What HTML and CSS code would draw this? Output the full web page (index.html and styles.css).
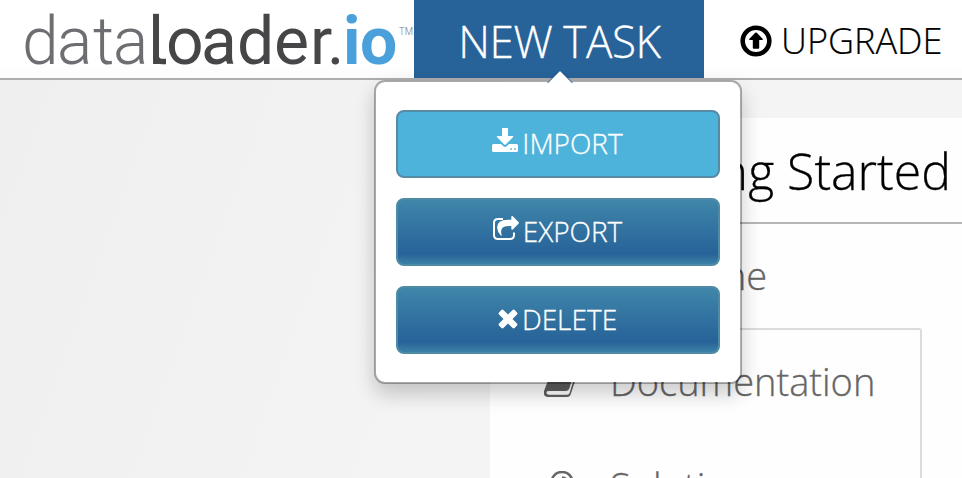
FILE: index.html
```html
<!DOCTYPE html>
<html lang="en">
<head>
<meta charset="utf-8">
<title>dataloader.io</title>
<link rel="stylesheet" href="styles.css">
</head>
<body>
<header class="topbar">
  <svg class="logo" width="414" height="78" viewBox="0 0 414 78">
    <text class="logo-data" x="22 57 93 113" y="64">data</text>
    <text class="logo-loader" x="148 166 201 237 274 310 327" y="64">loader.</text>
    <path class="logo-tail" d="M156 55Q156 61.500 162 61.500H166"/>
    <text class="logo-io" x="343 360" y="64">io</text>
    <text class="logo-tm" x="399" y="35" textLength="14" lengthAdjust="spacingAndGlyphs">TM</text>
  </svg>
  <div class="new-task">
    <span class="new-task-label">NEW TASK</span>
    <div class="popover">
      <svg class="arrow" width="28" height="14" viewBox="0 0 28 14"><path class="arrow-edge" d="M1 13 14 0 27 13Z"/><path class="arrow-fill" d="M1 14 14 1 27 14Z"/></svg>
      <a class="btn btn-active">
        <svg class="ico" width="26" height="25" viewBox="0 0 26 25"><path d="M10.500 0h5q.5 0 .5.600V8h4.700q.9.100.4.900L13.700 16.500q-.7.600-1.400 0L4.900 8.900Q4.400 8 5.300 8H10V.6q0-.6.5-.6Z"/><path fill-rule="evenodd" d="M1.500 16H9l2.300 2.300q1.700 1.500 3.400 0L17 16h7.500q1.500 0 1.500 1.500v5q0 1.500-1.500 1.500h-23Q0 24 0 22.500v-5Q0 16 1.500 16Zm16.700 4.200v1.600h1.700v-1.600Zm3.900 0v1.600h1.700v-1.600Z"/></svg>
        <span>IMPORT</span></a>
      <a class="btn">
        <svg class="ico" width="26" height="25" viewBox="0 0 26 25"><path class="ico-line" d="M10 2.900H5Q1 2.900 1 7v12q0 4 4 4h12q4 0 4-4v-2.500"/><path d="M19 0q.5 0 .8.300l5.900 5.900q.6.600 0 1.200l-5.900 6q-1.300.9-1.500-.6V10q-7-.5-9 2-2 2.600-.7 6.600.3 1.500-.8.900-3.600-4-3.700-8Q4.100 3.700 15 3.700h3.300V.8Q18.300 0 19 0Z"/></svg>
        <span>EXPORT</span></a>
      <a class="btn">
        <svg class="ico ico-x" width="20" height="20" viewBox="0 0 20 20"><path d="m1 3.400 2.400-2.500q1-.8 2 0L10 5.500 14.600.9q1-.8 2 0L19 3.400q.9 1 0 2L14.500 10l4.500 4.600q.9 1 0 2l-2.400 2.500q-1 .8-2 0L10 14.500l-4.600 4.600q-1 .8-2 0L1 16.600q-.9-1 0-2L5.500 10 1 5.400q-.9-1 0-2Z"/></svg>
        <span>DELETE</span></a>
    </div>
  </div>
  <a class="upgrade">
    <svg width="32" height="32" viewBox="0 0 32 32"><circle class="ring" cx="16" cy="16" r="13.300"/><path d="M15.200 7.800q.8-.6 1.600 0l6 6.100q.5 1.100-.8 1.100h-2.800v8q0 .7-.8.700h-4.800q-.8 0-.8-.7v-8H10q-1.300 0-.8-1.100Z"/></svg>
    <span>UPGRADE</span>
  </a>
</header>
<main class="page">
  <section class="panel">
    <h1 class="title">Getting Started</h1>
    <div class="welcome">Welcome</div>
    <nav class="menu">
      <a class="item">
        <svg width="36" height="32" viewBox="0 0 36 32"><path d="M12 1h17q3 0 2 3l-5.500 18q-1 3-4 3H5q-3 0-2.500 2 .5 1.700 2.500 1.700h18q2 0 2.700-2L32 6q1.500 1 1 3l-6 18.500Q26 31 23 31H4Q-1 31 0 25L8 4q1-3 4-3Z"/></svg>
        <span>Documentation</span></a>
      <a class="item">
        <svg width="36" height="32" viewBox="0 0 36 32"><path class="bulb" d="M14 26q0-4-3-7Q5 13 9 6q3-5 9-5t9 5q4 7-2 13-3 3-3 7M18 6.500q4.500 0 4.500 4.500"/><path d="M14 26h8v4h-8Z"/></svg>
        <span>Solutions</span></a>
    </nav>
  </section>
</main>
</body>
</html>
```

FILE: styles.css
```css
* { box-sizing: border-box; }
body {
  margin: 0;
  height: 478px;
  overflow: hidden;
  display: flex;
  flex-direction: column;
  font-family: "Open Sans", sans-serif;
  font-weight: 300;
  background: #fff;
}
.topbar {
  height: 80px;
  flex: none;
  display: flex;
  border-bottom: 2px solid #adadad;
  background: linear-gradient(#fff 80%, #fcfcfc);
}
.logo { flex: none; }
.logo text { font-family: Roboto, sans-serif; font-size: 66px; }
.logo .logo-data { font-weight: 300; fill: #6d6d72; }
.logo .logo-loader { font-weight: 400; fill: #464648; }
.logo .logo-io { font-weight: 700; fill: #4aa0da; }
.logo .logo-tm { font-size: 10px; fill: #777; }
.logo-tail { fill: none; stroke: #464648; stroke-width: 5.5; }
.new-task {
  position: relative;
  width: 290px;
  height: 78px;
  flex: none;
  display: flex;
  justify-content: center;
  background: #276298;
  color: #fff;
}
.new-task-label {
  font-size: 44px;
  letter-spacing: -.4px;
  line-height: 83px;
  white-space: nowrap;
  padding-left: 1px;
  -webkit-text-stroke: .3px;
}
.popover {
  position: absolute;
  z-index: 2;
  left: -40px;
  top: 80px;
  width: 368px;
  height: 304px;
  padding: 28px 20px;
  display: flex;
  flex-direction: column;
  gap: 20px;
  background: #fff;
  background-clip: padding-box;
  border: 2px solid rgba(0, 0, 0, .3);
  border-radius: 11px;
  box-shadow: 0 10px 20px rgba(0, 0, 0, .2);
}
.arrow { position: absolute; left: 170px; top: -12px; }
.arrow-edge { fill: #1f517e; }
.arrow-fill { fill: #fff; }
.btn {
  height: 68px;
  flex: none;
  display: flex;
  align-items: center;
  justify-content: center;
  gap: 5px;
  border: 2px solid #508ba5;
  border-radius: 8px;
  background: linear-gradient(#3f86aa, #276298 84%, #3b80a6);
  font-size: 28px;
  line-height: 62px;
  -webkit-text-stroke: .3px;
}
.btn span { margin: -2px 1px 0 -1px; }
.btn-active { background: #4eb3db; border-color: #568ba4; }
.ico { fill: #fff; margin-top: -7px; }
.ico-x { margin-top: -3px; }
.ico-line { fill: none; stroke: #fff; stroke-width: 2; }
.upgrade {
  display: flex;
  align-items: center;
  gap: 9px;
  padding: 5px 0 0 36px;
  font-size: 36px;
  color: #000;
}
.upgrade svg { margin-top: -1px; }
.upgrade span { margin-top: -2px; -webkit-text-stroke: .2px; }
.ring { fill: none; stroke: #000; stroke-width: 4.6; }
.page {
  flex: 1;
  min-height: 0;
  padding: 38px 0 0 490px;
  background: linear-gradient(110deg, #efefef, #f4f4f4 50%);
}
.panel { height: 360px; background: #fefefe; overflow: hidden; }
.title {
  margin: 0;
  height: 106px;
  padding-right: 11px;
  border-bottom: 2px solid #b5b5b5;
  font-size: 50px;
  font-weight: 300;
  line-height: 107px;
  text-align: right;
  white-space: nowrap;
  -webkit-text-stroke: .3px;
}
.welcome {
  height: 104px;
  padding-left: 119px;
  font-size: 38px;
  line-height: 103px;
  color: #666;
  -webkit-text-stroke: .3px;
}
.menu {
  width: 432px;
  height: 200px;
  border: 2px solid #dcdcdc;
  border-left: 0;
  border-radius: 0 3px 0 0;
}
.item {
  height: 105px;
  padding-left: 54px;
  display: flex;
  align-items: center;
  gap: 30px;
  font-size: 38px;
  line-height: 102px;
  color: #666;
  -webkit-text-stroke: .3px;
}
.item span { margin-top: -3px; }
.item svg { fill: #5f5f5f; margin-top: -1px; }
.item .bulb { fill: none; stroke: #666; stroke-width: 2.5; }
```
